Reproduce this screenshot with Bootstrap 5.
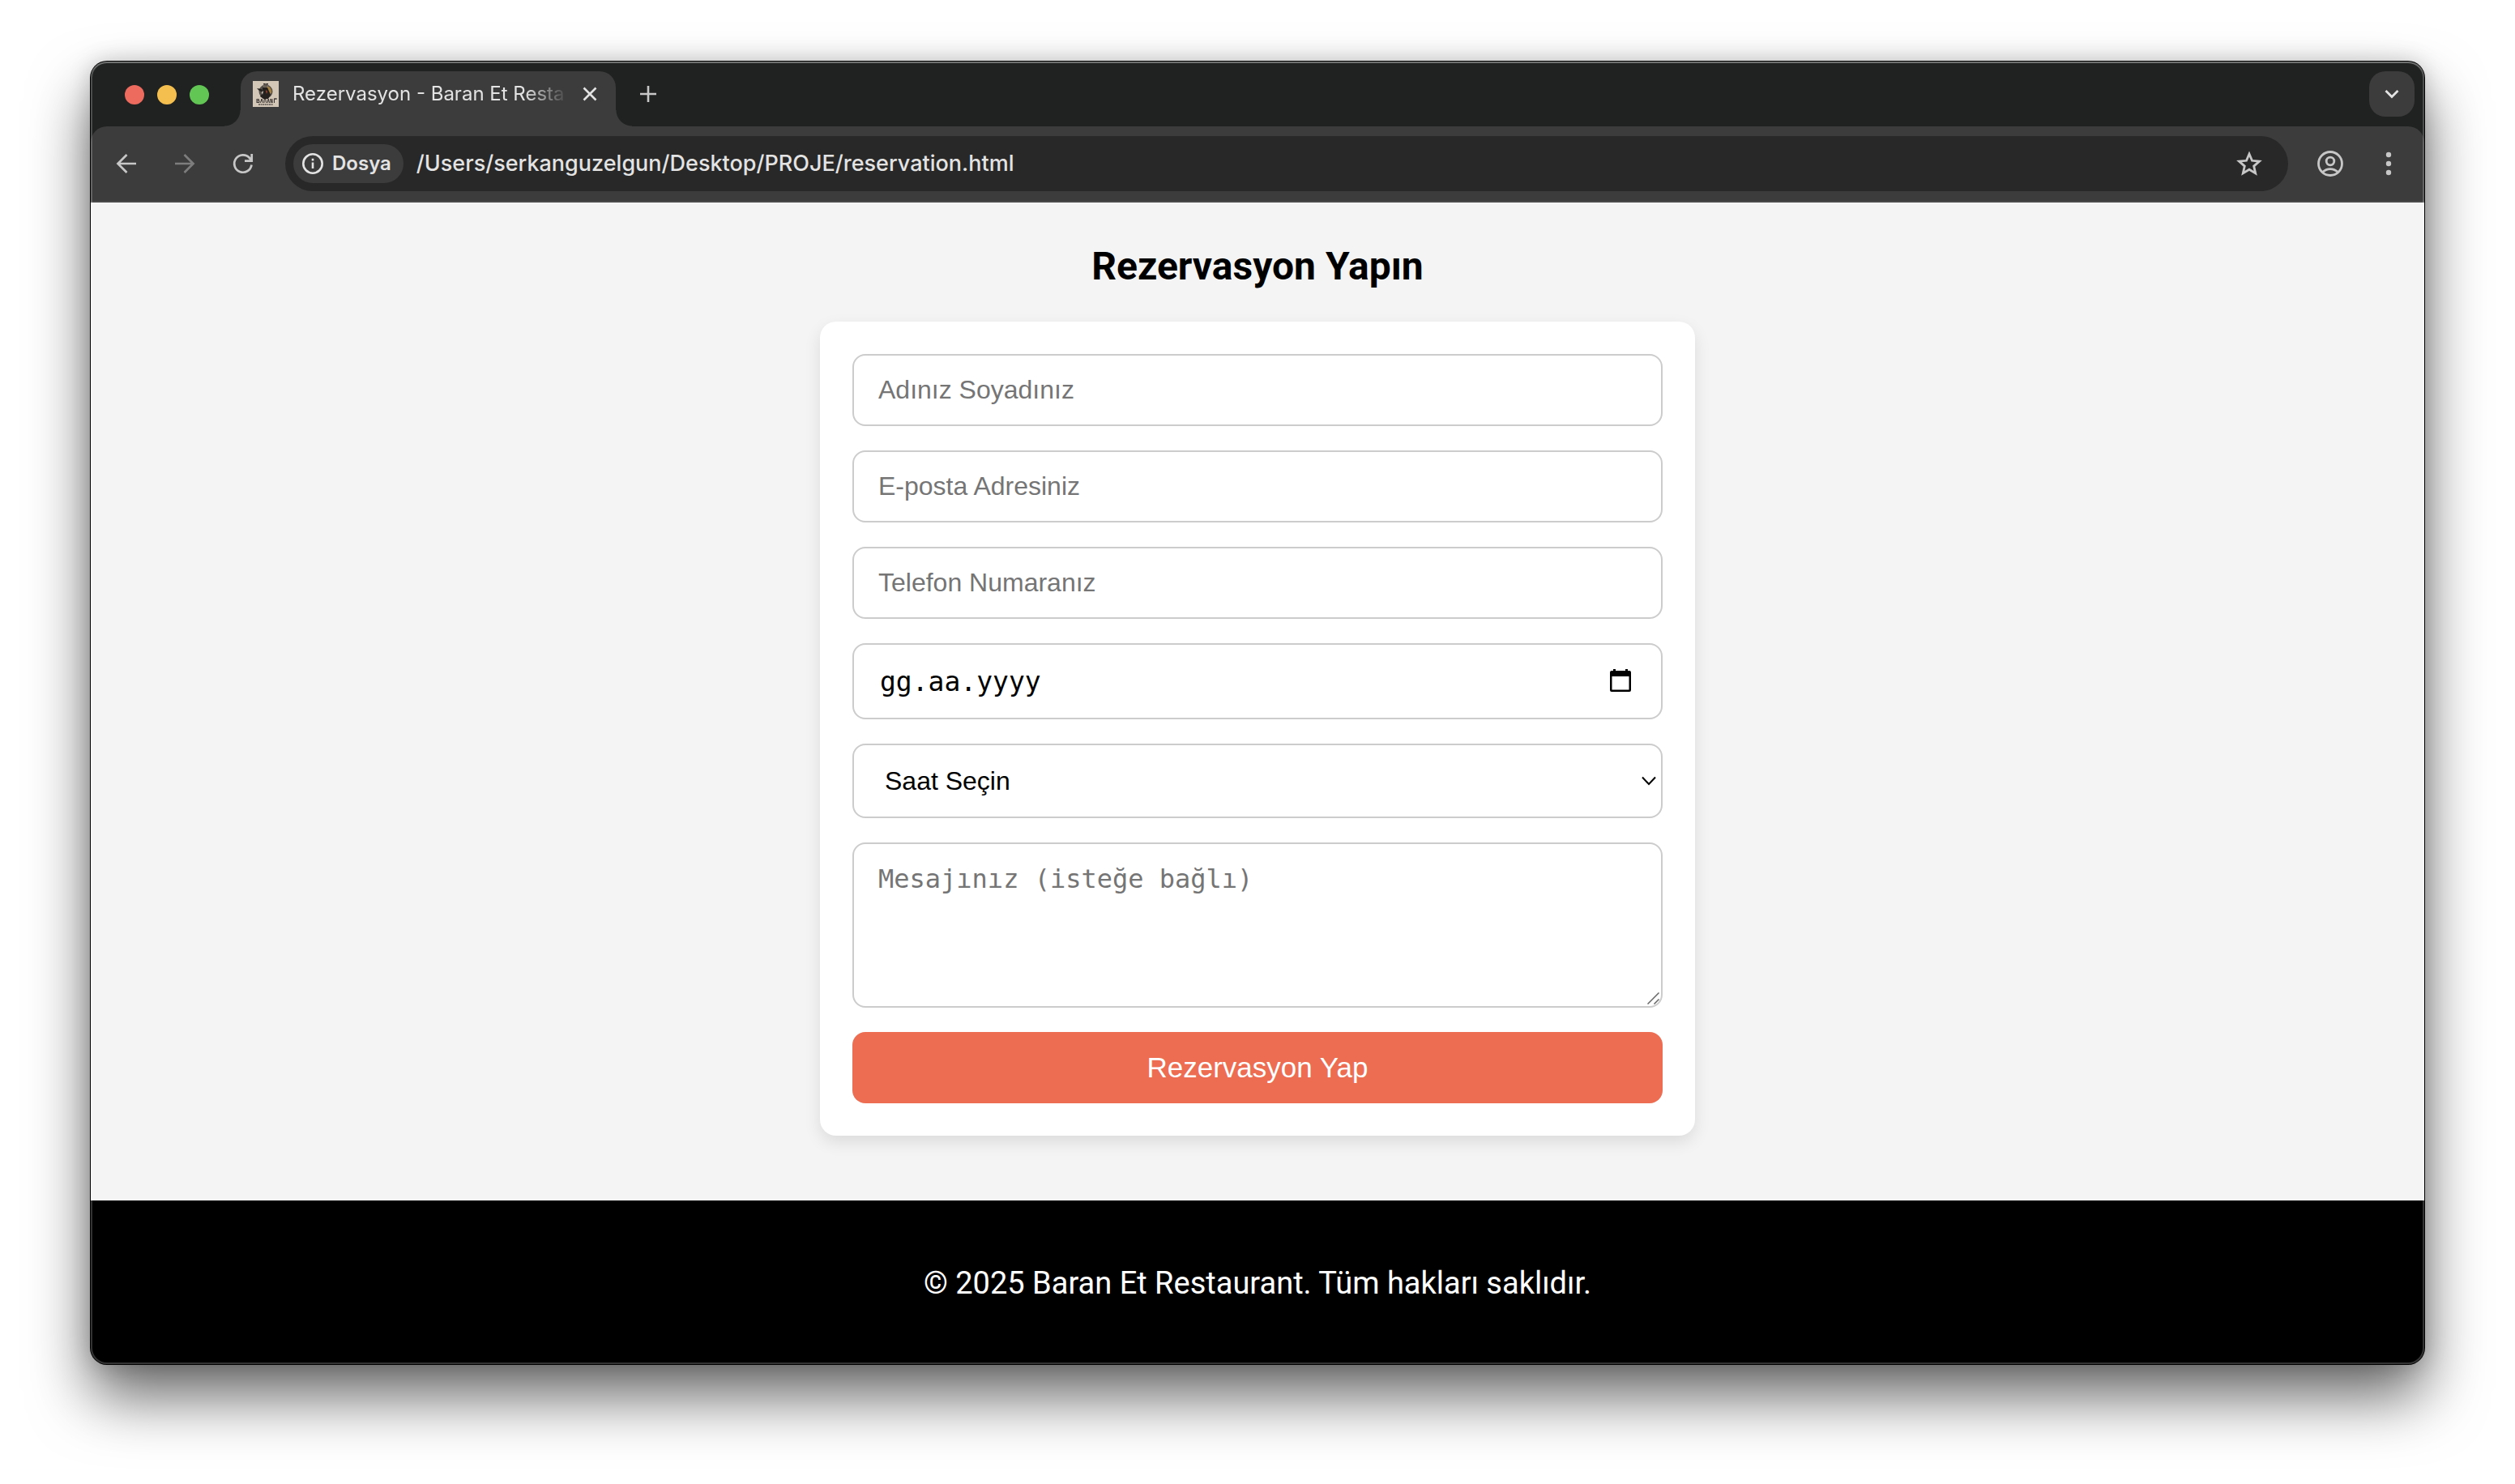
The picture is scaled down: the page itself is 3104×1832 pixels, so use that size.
<!DOCTYPE html>
<html lang="tr">
<head>
<meta charset="utf-8">
<meta name="viewport" content="width=device-width, initial-scale=1">
<title>Rezervasyon - Baran Et Restaurant</title>
<link rel="stylesheet" href="https://cdn.jsdelivr.net/npm/bootstrap@5.3.0/dist/css/bootstrap.min.css">
<style>
  body { background: #fff; font-family: Roboto, "Liberation Sans", sans-serif; color: #000; }
  .desktop { padding: 76px 112px 148px; }
  svg { display: block; flex: none; }

  /* window frame */
  .app-window { border-radius: 20px; background: #202221; box-shadow: 0 0 0 1px #000, 0 0 28px rgba(0,0,0,.18), 0 40px 74px rgba(0,0,0,.6); }
  .app-window::after { content: ""; position: absolute; inset: 0; border-radius: 20px; pointer-events: none; box-shadow: inset 0 0 0 2px rgba(255,255,255,.2), inset 0 2px 0 rgba(255,255,255,.2); }
  .ui-font { font-family: Inter, "Liberation Sans", sans-serif; color: #e3e3e3; }
  .ui-font button { background: none; border: 0; padding: 0; color: #c7c7c7; }

  /* tab strip */
  .tab-strip { height: 80px; padding: 12px 12px 0 42px; }
  .lights { gap: 16px; margin-right: 39px; padding: 17px 0 0; }
  .light { width: 24px; height: 24px; border-radius: 50%; }
  .light-close { background: #ed6a5e; }
  .light-min { background: #f5bf4f; }
  .light-max { background: #62c655; }
  .browser-tab { width: 463px; height: 68px; padding: 0 22px 12px 15px; background: #3c3c3c; border-radius: 20px 20px 0 0; }
  .browser-tab::before, .browser-tab::after { content: ""; position: absolute; bottom: 0; width: 20px; height: 20px; }
  .browser-tab::before { right: 100%; background: radial-gradient(circle at 0 0, transparent 19px, #3c3c3c 20px); }
  .browser-tab::after { left: 100%; background: radial-gradient(circle at 100% 0, transparent 19px, #3c3c3c 20px); }
  .tab-title { width: 342px; margin: 0 16px 0 17px; font-size: 24px; line-height: 32px; -webkit-mask-image: linear-gradient(90deg, #000 84%, transparent); mask-image: linear-gradient(90deg, #000 84%, transparent); }
  .ui-font .new-tab { margin-left: 28px; padding-top: 16px; }
  .ui-font .list-btn { width: 56px; height: 56px; border-radius: 20px; background: #3c3c3c; color: #e3e3e3; }

  /* toolbar */
  .tool-bar { height: 94px; padding: 0 34px 0 28px; background: #3c3c3c; border-radius: 20px 20px 0 0; border-bottom: 2px solid #4a4a4a; }
  .nav-btns { gap: 40px; margin-right: 36px; }
  .omnibox { height: 68px; border-radius: 34px; background: #282828; padding: 0 32px 0 10px; }
  .ui-font .file-chip { height: 48px; border-radius: 24px; background: #3c3c3c; color: #e3e3e3; padding: 0 15px 0 10px; gap: 10px; font-size: 24px; font-weight: 600; }
  .address { background: none; border: 0; outline: 0; padding: 0; margin-left: 16px; font-size: 27px; font-weight: 500; color: #e3e3e3; min-width: 0; }
  .tool-end { gap: 46px; margin-left: 36px; }

  /* page */
  .site-main { background: #f4f4f4; padding: 50px 20px 80px; }
  .page-title { font-size: 48px; font-weight: 700; line-height: 57px; margin-bottom: 40px; }
  .booking { max-width: 1080px; padding: 40px; gap: 30px; border: 0; border-radius: 20px; background: #fff; box-shadow: 0 8px 20px rgba(0,0,0,.1); }
  .booking .field { display: block; width: 100%; padding: 24px 30px; border: 2px solid #ccc; border-radius: 16px; background: #fff; color: #000; font-family: "Liberation Sans", Arial, sans-serif; font-size: 32px; line-height: 37px; height: 89px; }
  .booking .field::placeholder { color: #757575; opacity: 1; }
  .booking .date-field { height: 94px; padding: 24px 32px; font-family: "DejaVu Sans Mono", monospace; font-size: 33px; }
  .booking .date-field::placeholder { color: #000; }
  .booking .time-field { height: 92px; padding: 0 30px 0 38px; appearance: none; }
  .booking .note-field { height: 204px; font-family: "DejaVu Sans Mono", monospace; line-height: 38px; resize: none; }
  .field-icon { position: absolute; pointer-events: none; top: 50%; transform: translateY(-50%); }
  .icon-date { right: 36px; }
  .icon-time { right: 8px; }
  .icon-grip { position: absolute; pointer-events: none; right: 4px; bottom: 4px; }
  .booking .send-btn { height: 88px; padding: 0; border: 0; border-radius: 16px; background: #ed6d52; color: #fff; font-family: "Liberation Sans", Arial, sans-serif; font-size: 35px; line-height: 40px; }
  .site-footer { background: #000; color: #fff; padding: 79px 20px 77px; font-size: 38px; line-height: 46px; border-radius: 0 0 20px 20px; }
</style>
</head>
<body>
<div class="desktop">
  <div class="app-window position-relative">
    <header class="ui-font">
      <div class="tab-strip d-flex align-items-start">
        <div class="lights d-flex">
          <span class="light light-close"></span>
          <span class="light light-min"></span>
          <span class="light light-max"></span>
        </div>
        <div class="browser-tab position-relative d-flex align-items-center">
          <svg width="32" height="32" viewBox="0 0 32 32" aria-hidden="true">
            <rect width="32" height="32" fill="#d3c7b8"/>
            <circle cx="16" cy="13" r="8.500" fill="#55504a"/>
            <path d="M17 6q7 2 6 9l-5 3z" fill="#a5803c"/>
            <path d="M13 3h6l-1 4h-4zM5 9l6 1 2 4-5-2zM12 8l6 0 4 9-3 5h-6l-4-3 3-4z" fill="#24211f"/>
            <path d="M14 4v4M16 3v5M18 4v4" stroke="#9b9083" stroke-width="1"/>
            <path d="M16 11l2 2-1 3z" fill="#b44a35"/>
            <path d="M11 14l2-2-1 5z" fill="#e2d8ca"/>
            <path d="M5 22v5M5 22.500h2.500v2H5M5 26.500h3v-2M9.500 27l1.500-5 1.500 5M14 27v-4.500h2V25l1 2M18 27l1.200-5 1.300 5M22 27v-5l2 5v-5M29 22h-2.500v5M30 22h-4" stroke="#3a3532" stroke-width="1" fill="none"/>
            <path d="M7 29h18" stroke="#5b544e" stroke-width="1.500" stroke-dasharray="2 .6"/>
          </svg>
          <span class="tab-title text-nowrap">Rezervasyon - Baran Et Resta</span>
          <button type="button" aria-label="Sekmeyi kapat"><svg width="20" height="20" viewBox="0 0 20 20" fill="none" stroke="#e3e3e3" stroke-width="2.600"><path d="M2.500 2.500l15 15M17.500 2.500l-15 15"/></svg></button>
        </div>
        <button type="button" class="new-tab" aria-label="Yeni sekme"><svg width="24" height="24" viewBox="0 0 24 24" fill="none" stroke="currentColor" stroke-width="2.600"><path d="M12 2v20M2 12h20"/></svg></button>
        <button type="button" class="list-btn ms-auto d-flex align-items-center justify-content-center" aria-label="Sekmelerde ara"><svg width="20" height="14" viewBox="0 0 20 14" fill="none" stroke="currentColor" stroke-width="2.800"><path d="M2.500 3l7.500 7.500L17.500 3"/></svg></button>
      </div>
      <div class="tool-bar d-flex align-items-center">
        <div class="nav-btns d-flex">
          <button type="button" aria-label="Geri"><svg width="32" height="32" viewBox="0 0 32 32" fill="none" stroke="currentColor" stroke-width="2.700"><path d="M28 16H6M16.500 5l-11 11 11 11"/></svg></button>
          <button type="button" aria-label="İleri"><svg width="32" height="32" viewBox="0 0 32 32" fill="none" stroke="#7d7d7d" stroke-width="2.700"><path d="M4 16h22M15.500 5l11 11-11 11"/></svg></button>
          <button type="button" aria-label="Yenile"><svg width="32" height="32" viewBox="0 0 32 32" fill="none" stroke="currentColor" stroke-width="2.700"><path d="M26.500 17.500A10.700 10.700 0 1 1 24 9l2.500 3M26.700 4v8.700H18"/></svg></button>
        </div>
        <div class="omnibox d-flex align-items-center flex-fill">
          <button type="button" class="file-chip d-flex align-items-center"><svg width="28" height="28" viewBox="0 0 28 28" fill="none" stroke="currentColor" stroke-width="2.600"><circle cx="14" cy="14" r="11.700"/><path d="M14 12.500v7.500M14 7.800v2.800"/></svg>Dosya</button>
          <input class="address flex-fill" type="text" aria-label="Adres çubuğu" value="/Users/serkanguzelgun/Desktop/PROJE/reservation.html">
          <button type="button" aria-label="Yer işareti ekle"><svg width="32" height="32" viewBox="0 0 32 32" fill="none" stroke="currentColor" stroke-width="2.800"><path d="M16 4l3.500 8.300 9 .8-6.800 6 2 8.800-7.700-4.700-7.700 4.700 2-8.800-6.800-6 9-.8z"/></svg></button>
        </div>
        <div class="tool-end d-flex align-items-center">
          <button type="button" aria-label="Profil"><svg width="32" height="32" viewBox="0 0 32 32" fill="none" stroke="currentColor" stroke-width="2.800"><circle cx="16" cy="16" r="14.500"/><circle cx="16" cy="13" r="4.800"/><path d="M6.500 26.500c5.500-5.200 13.500-5.200 19 0"/></svg></button>
          <button type="button" aria-label="Menü"><svg width="20" height="32" viewBox="0 0 20 32" fill="currentColor"><circle cx="10" cy="5" r="3.200"/><circle cx="10" cy="16" r="3.200"/><circle cx="10" cy="27" r="3.200"/></svg></button>
        </div>
      </div>
    </header>

    <main class="site-main">
      <h2 class="page-title text-center">Rezervasyon Yapın</h2>
      <form class="booking card mx-auto">
        <input class="field" type="text" aria-label="Adınız Soyadınız" placeholder="Adınız Soyadınız">
        <input class="field" type="email" aria-label="E-posta Adresiniz" placeholder="E-posta Adresiniz">
        <input class="field" type="tel" aria-label="Telefon Numaranız" placeholder="Telefon Numaranız">
        <div class="position-relative">
          <input class="field date-field" type="text" aria-label="Tarih" placeholder="gg.aa.yyyy">
          <svg class="field-icon icon-date" width="32" height="32" viewBox="0 0 32 32" aria-hidden="true"><path fill-rule="evenodd" d="M7 1h3v2h12V1h3v2h2q2 0 2 2v22q0 2-2 2H5q-2 0-2-2V5q0-2 2-2h2zM5.500 10v16.500h21V10z"/></svg>
        </div>
        <div class="position-relative">
          <select class="field time-field" aria-label="Saat"><option>Saat Seçin</option></select>
          <svg class="field-icon icon-time" width="18" height="12" viewBox="0 0 18 12" fill="none" stroke="#000" stroke-width="2" aria-hidden="true"><path d="M1 1.500l8 8.500 8-8.500"/></svg>
        </div>
        <div class="position-relative">
          <textarea class="field note-field" aria-label="Mesajınız" placeholder="Mesajınız (isteğe bağlı)"></textarea>
          <svg class="icon-grip" width="15" height="15" viewBox="0 0 15 15" stroke="#666" stroke-width="1.500" aria-hidden="true"><path d="M.5 14.500l14-14M8.500 14.500l6-6"/></svg>
        </div>
        <button class="btn send-btn w-100" type="submit">Rezervasyon Yap</button>
      </form>
    </main>
    <footer class="site-footer text-center">© 2025 Baran Et Restaurant. Tüm hakları saklıdır.</footer>
  </div>
</div>
<script src="https://cdn.jsdelivr.net/npm/bootstrap@5.3.0/dist/js/bootstrap.bundle.min.js"></script>
</body>
</html>
